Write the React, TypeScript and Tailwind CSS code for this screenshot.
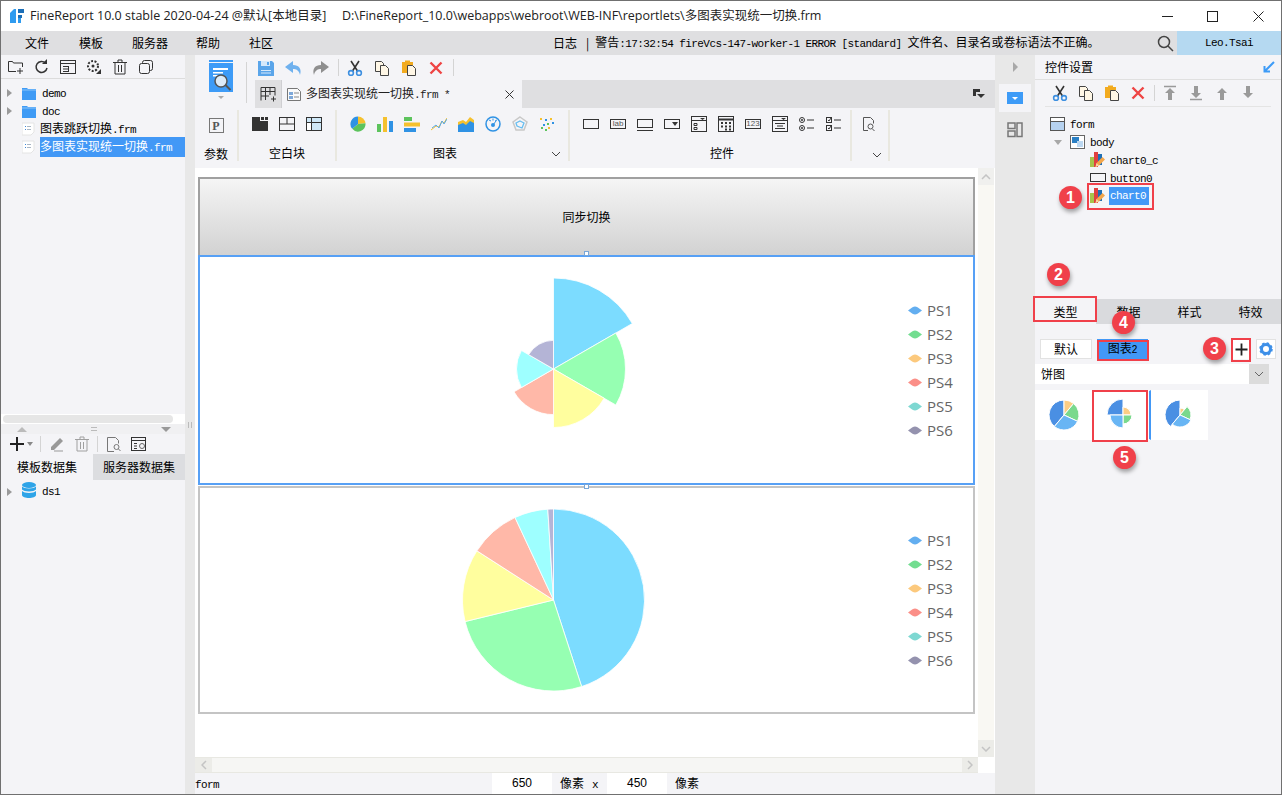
import type { ReactNode } from "react";

const polar = (cx: number, cy: number, r: number, deg: number) => {
  const a = ((deg - 90) * Math.PI) / 180;
  return `${(cx + r * Math.cos(a)).toFixed(2)} ${(cy + r * Math.sin(a)).toFixed(2)}`;
};

const sector = (cx: number, cy: number, r: number, a0: number, a1: number) =>
  `M${cx} ${cy}L${polar(cx, cy, r, a0)}A${r} ${r} 0 ${a1 - a0 > 180 ? 1 : 0} 1 ${polar(cx, cy, r, a1)}Z`;

const pieColors = ["#7cdcff", "#96ffb2", "#fffe9e", "#ffb8a8", "#9effff", "#b4b4d6"];
const legendColors = ["#63aef0", "#72dd90", "#fcc97d", "#fb8f88", "#7ed8d2", "#9492ae"];

const Ic = ({ children, w = 16, h = 16 }: { children: ReactNode; w?: number; h?: number }) => (
  <svg width={w} height={h} viewBox={`0 0 ${w} ${h}`} fill="none" className="shrink-0">
    {children}
  </svg>
);

// ascii part of the old bitmap font
const A = ({ children }: { children: ReactNode }) => (
  <span className="font-['Liberation_Mono',monospace] text-[11px] tracking-[-0.6px]">{children}</span>
);

const Logo = () => (
  <Ic>
    <path d="M1 5 5 1h2v14H1z" fill="#2f9bef" />
    <path d="M9 1h6v4H9zM9 7h4v3H9z" fill="#1c6fb8" />
    <path d="M9 10h3v5H9z" fill="#2f9bef" />
  </Ic>
);

const Cut = () => (
  <Ic>
    <path d="M4 1l6.5 10M12 1 5.5 11" stroke="#333" strokeWidth="1.6" />
    <circle cx="4" cy="13" r="2.4" stroke="#3d8fe0" strokeWidth="1.6" />
    <circle cx="12" cy="13" r="2.4" stroke="#3d8fe0" strokeWidth="1.6" />
  </Ic>
);

const CopyDoc = () => (
  <Ic>
    <path d="M1.5 1.5h6l2 2v8h-8z" fill="#fff7e6" stroke="#444" />
    <path d="M6.5 5.5h5l3 3v7h-8z" fill="#fff7e6" stroke="#444" />
  </Ic>
);

const Paste = () => (
  <Ic>
    <path d="M1 2h3V0.5h5V2h3v11H1z" fill="#f2ab1f" />
    <path d="M6.5 5.5h5l3 3v7h-8z" fill="#fff7e6" stroke="#444" />
  </Ic>
);

const RedX = () => (
  <Ic w={14} h={14}>
    <path d="M1.5 1.5l11 11M12.5 1.5l-11 11" stroke="#ee4444" strokeWidth="2.4" />
  </Ic>
);

const Save = () => (
  <Ic>
    <path d="M0 1h14l2 2v13H0z" fill="#5aa5ea" />
    <path d="M3 1h9v5H3z" fill="#d6e9fb" />
    <path d="M9 2h2v3H9z" fill="#5aa5ea" />
    <path d="M3 10h10v1H3zM3 12.500h10v1H3z" fill="#d6e9fb" />
  </Ic>
);

const Arrow = ({ color, flip }: { color: string; flip?: boolean }) => (
  <svg width="17" height="16" viewBox="0 0 17 16" className={flip ? "-scale-x-100 shrink-0" : "shrink-0"}>
    <path d="M8 1 0 7l8 6V9c3 0 6 1 7 6 2-6-1-10-7-10z" fill={color} />
  </svg>
);

const Sep = ({ h = 18, mx = 0 }: { h?: number; mx?: number }) => (
  <div className="w-px shrink-0 bg-[#d4d4d4]" style={{ height: h, marginLeft: mx, marginRight: mx }} />
);

const Tri = ({ down }: { down?: boolean }) =>
  down ? (
    <div className="h-0 w-0 shrink-0 border-x-[4px] border-t-[5px] border-x-transparent border-t-[#a8a8a8]" />
  ) : (
    <div className="h-0 w-0 shrink-0 border-y-[4px] border-l-[5px] border-y-transparent border-l-[#9a9a9a]" />
  );

const FolderIcon = () => (
  <Ic w={14} h={13}>
    <path d="M0 1h5l1 1h8v11H0z" fill="#3f9bf5" />
    <path d="M0 3h14" stroke="#8cc5fa" />
  </Ic>
);

const FrmIcon = () => (
  <Ic w={13} h={14}>
    <path d="M0 1h12v9l-3 3H0z" fill="#fff" stroke="#e4e4e4" />
    <path d="M3 4h1v1H3zM3 7h1v1H3z" fill="#3f87d8" />
    <path d="M5 4h4v1H5zM5 7h4v1H5z" fill="#a9b6c4" />
  </Ic>
);

const ChartNodeIcon = () => (
  <Ic>
    <path d="M0 5h5v10H0z" fill="#a7c44c" />
    <path d="M4 0h4v15H4z" fill="#e04040" />
    <path d="M8 2h4v11H8z" fill="#1f6fb5" />
    <path d="M5.500 15l1-4 6-6 2.500 2.500-6 6z" fill="#f4a64a" />
    <path d="M5.500 15l1-4 2.500 2.500z" fill="#f7d7a8" />
  </Ic>
);

const PieIcon = () => (
  <Ic>
    <path d={sector(8, 8, 7.500, 0, 85)} fill="#f5c12e" />
    <path d={sector(8, 8, 7.500, 85, 230)} fill="#5cc35c" />
    <path d={sector(8, 8, 7.500, 230, 360)} fill="#2f92e4" />
  </Ic>
);

const ChartIcons = () => (
  <>
    <PieIcon />
    <Ic>
      <path d="M0 8h4v8H0z" fill="#5cc35c" />
      <path d="M6 1h4v15H6z" fill="#f5c12e" />
      <path d="M12 5h4v11h-4z" fill="#2f92e4" />
    </Ic>
    <Ic>
      <path d="M0 1h8v4H0z" fill="#5cc35c" />
      <path d="M0 6.500h16v4H0z" fill="#f5c12e" />
      <path d="M0 12h12v4H0z" fill="#2f92e4" />
    </Ic>
    <Ic>
      <path d="M0 14l5-4 3 1 3-6 2 2 3-5" stroke="#f5c12e" />
      <path d="M1 12l4-3 3 3 3-7 2 3 3-5" stroke="#58a8e8" />
    </Ic>
    <Ic>
      <path d="M0 6l5-2 3 2 4-5 4 3v12H0z" fill="#f5c12e" />
      <path d="M0 9l5-2 3 2 4-4 4 2v9H0z" fill="#2f92e4" />
    </Ic>
    <Ic>
      <circle cx="8" cy="8" r="7" stroke="#2f92e4" strokeWidth="1.500" />
      <path d="M4 4l2 1M8 2.500v2M12 4l-2 1" stroke="#2f92e4" />
      <circle cx="8" cy="9" r="2" fill="#2f92e4" />
      <path d="M8 9l3-4" stroke="#2f92e4" />
    </Ic>
    <Ic>
      <path d="M8 1l7 5-3 8H4L1 6z" stroke="#c8c8c8" strokeWidth="1.500" />
      <path d="M8 5l4 2-2 5-5-2-1-3z" stroke="#67bdf0" strokeWidth="1.300" />
    </Ic>
    <Ic>
      <path d="M1 2h2v2H1zM11 2h2v2h-2zM9 11h2v2H9z" fill="#f5c12e" />
      <path d="M6 3h2v2H6zM4 8h2v2H4zM13 6h2v2h-2z" fill="#2f92e4" />
      <path d="M8 7h2v2H8zM2 11h2v2H2zM6 13h2v2H6z" fill="#5cc35c" />
    </Ic>
  </>
);

const Box = ({ children }: { children?: ReactNode }) => (
  <Ic>
    <rect x="0.500" y="3.500" width="15" height="9" stroke="#333" />
    {children}
  </Ic>
);

const WidgetIcons = () => (
  <>
    <Box />
    <div className="flex h-[10px] w-4 items-center justify-center border border-[#333] font-['Liberation_Sans',sans-serif] text-[8px] leading-none text-[#555]">
      lab
    </div>
    <Ic>
      <rect x="0.500" y="3.500" width="15" height="8" stroke="#333" />
      <path d="M0 14.500h16" stroke="#333" />
    </Ic>
    <Box>
      <path d="M8 6h6l-3 4z" fill="#333" />
    </Box>
    <Ic>
      <rect x="0.500" y="0.500" width="15" height="15" stroke="#333" />
      <path d="M0 4.500h16" stroke="#333" />
      <path d="M9 2h5l-2.500 2z" fill="#333" />
      <path d="M3 7.500h3v2H3zM3 11.500h3v2H3z" stroke="#333" />
    </Ic>
    <Ic>
      <rect x="0.500" y="0.500" width="15" height="15" stroke="#333" />
      <path d="M0 3.500h16" stroke="#333" strokeWidth="2" />
      <path d="M3 6h2v2H3zM7 6h2v2H7zM11 6h2v2h-2zM3 9.500h2v2H3zM7 9.500h2v2H7zM11 9.500h2v2h-2zM7 12.500h2v2H7zM11 12.500h2v2h-2z" fill="#333" />
    </Ic>
    <div className="flex h-[10px] w-4 items-center justify-center border border-[#333] font-['Liberation_Sans',sans-serif] text-[8px] leading-none text-[#555]">
      123
    </div>
    <Ic>
      <rect x="0.500" y="0.500" width="15" height="15" stroke="#333" />
      <path d="M0 4.500h16M3 7.500h10M5 10h6M3 12.500h10" stroke="#333" />
      <path d="M9 2h5l-2.500 2z" fill="#333" />
    </Ic>
    <Ic>
      <circle cx="3" cy="4" r="2.500" stroke="#333" />
      <circle cx="3" cy="4" r="1" fill="#333" />
      <circle cx="3" cy="12" r="2.500" stroke="#333" />
      <circle cx="3" cy="12" r="1" fill="#333" />
      <path d="M8 4h7M8 12h7" stroke="#333" />
    </Ic>
    <Ic>
      <rect x="0.500" y="1.500" width="5" height="5" stroke="#333" />
      <rect x="0.500" y="9.500" width="5" height="5" stroke="#333" />
      <path d="M2 4l1 1 2-3M2 12l1 1 2-3" stroke="#333" />
      <path d="M8 4h7M8 12h7" stroke="#333" />
    </Ic>
  </>
);

const LeftTree = () => (
  <div className="flex flex-1 flex-col pt-[5px] text-[12px] leading-[18px] text-black">
    {["demo", "doc"].map((n) => (
      <div key={n} className="flex h-[18px] items-center pl-[6px]">
        <Tri />
        <div className="ml-[10px]">
          <FolderIcon />
        </div>
        <span className="ml-[6px]">
          <A>{n}</A>
        </span>
      </div>
    ))}
    <div className="flex h-[18px] items-center pl-[21px]">
      <FrmIcon />
      <span className="ml-[5px]">
        图表跳跃切换<A>.frm</A>
      </span>
    </div>
    <div className="flex h-[18px] items-center pl-[21px]">
      <FrmIcon />
      <span className="ml-[5px] flex-1 bg-[#4298f6] text-white">
        多图表实现统一切换<A>.frm</A>
      </span>
    </div>
  </div>
);

const LeftPanel = () => (
  <div className="flex w-[184px] shrink-0 flex-col bg-[#f4f4f7]">
    <div className="flex h-[24px] shrink-0 items-center gap-[10px] border-b border-[#dcdcdc] pl-[7px] pt-px">
      <Ic>
        <path d="M8 12.500H0.500v-10h4l1 1.500h9v4" stroke="#333" />
        <path d="M9 12h6M12 9v6" stroke="#333" />
      </Ic>
      <Ic>
        <path d="M13 9a5.500 5.500 0 1 1-1.500-5" stroke="#333" strokeWidth="1.500" />
        <path d="M13 0v5H8z" fill="#333" />
      </Ic>
      <Ic>
        <rect x="0.500" y="1.500" width="15" height="13" stroke="#333" />
        <path d="M0 4.500h16M3 7.500h5M3 10h5M3 12.500h5M8.500 7v6" stroke="#333" />
      </Ic>
      <Ic>
        <circle cx="7" cy="7" r="5" stroke="#333" strokeWidth="2" strokeDasharray="2 1.500" />
        <circle cx="7" cy="7" r="1.500" fill="#333" />
        <path d="M10 15h5v-5z" fill="#333" />
      </Ic>
      <Ic>
        <path d="M1 3.500h14M6 3V1h4v2M3 4v11h10V4M6.500 6v7M9.500 6v7" stroke="#333" />
      </Ic>
      <Ic>
        <rect x="4.500" y="1.500" width="10" height="10" rx="2" stroke="#333" />
        <rect x="1.500" y="4.500" width="10" height="10" rx="2" fill="#f4f4f7" stroke="#333" />
      </Ic>
    </div>
    <LeftTree />
    <div className="flex h-[10px] shrink-0 items-center bg-white pl-[2px]">
      <div className="h-2 w-[170px] rounded-[4px] bg-[#e6e6e6]" />
    </div>
    <div className="flex h-[10px] shrink-0 items-center justify-between bg-[#f0f0f2] pl-[16px] pr-[14px]">
      <div className="h-0 w-0 border-x-[5px] border-b-[5px] border-x-transparent border-b-[#bbb]" />
      <div className="h-[4px] w-[6px] border-y border-[#bbb]" />
      <div className="h-0 w-0 border-x-[5px] border-t-[5px] border-x-transparent border-t-[#999]" />
    </div>
    <div className="flex h-[20px] shrink-0 items-center pl-[8px]">
      <Ic>
        <path d="M1 8h14M8 1v14" stroke="#222" strokeWidth="2" />
      </Ic>
      <div className="ml-[2px] h-0 w-0 border-x-[3px] border-t-[4px] border-x-transparent border-t-[#888]" />
      <div className="ml-[7px]">
        <Sep h={16} />
      </div>
      <div className="ml-[8px]">
        <Ic>
          <path d="M2 11 11 2l3 3-9 9H2z" fill="#999" />
          <path d="M5 15h9" stroke="#999" />
        </Ic>
      </div>
      <div className="ml-[9px]">
        <Ic>
          <path d="M1 3.500h14M6 3V1h4v2M3 4v11h10V4M6.500 6v7M9.500 6v7" stroke="#a0a0a0" />
        </Ic>
      </div>
      <div className="ml-[7px]">
        <Sep h={16} />
      </div>
      <div className="ml-[8px]">
        <Ic>
          <path d="M8 15.500H1.500v-14h8l3 3v3" stroke="#777" />
          <circle cx="10.500" cy="11" r="2.500" stroke="#777" />
          <path d="M12.500 13l2 2" stroke="#777" />
        </Ic>
      </div>
      <div className="ml-[9px]">
        <Ic>
          <rect x="0.500" y="1.500" width="14" height="13" stroke="#333" />
          <path d="M0 4.500h15M3 7.500h3M3 10h3M3 12.500h3" stroke="#333" />
          <circle cx="11" cy="10" r="2.500" stroke="#666" />
        </Ic>
      </div>
    </div>
    <div className="flex h-[26px] shrink-0 text-[12px] leading-[26px] text-black">
      <div className="w-[92px] text-center">模板数据集</div>
      <div className="flex-1 bg-[#dcdde0] text-center">服务器数据集</div>
    </div>
    <div className="flex h-[314px] shrink-0 items-start pl-[6px] pt-[2px] text-[12px]">
      <div className="mt-[6px]">
        <Tri />
      </div>
      <div className="ml-[10px]">
        <Ic w={14} h={16}>
          <ellipse cx="7" cy="3" rx="7" ry="3" fill="#2ea4e8" />
          <path d="M0 4.500c2 2.500 12 2.500 14 0v3c-2 2.500-12 2.500-14 0zM0 9c2 2.500 12 2.500 14 0v4c0 4-14 4-14 0z" fill="#2ea4e8" />
        </Ic>
      </div>
      <span className="ml-[6px] leading-[16px]">
        <A>ds1</A>
      </span>
    </div>
  </div>
);

const TopBar = () => (
  <div className="flex h-[53px] shrink-0 bg-[#f4f4f7]">
    <div className="flex w-[60px] shrink-0">
      <div className="ml-[14px] mt-[5px] flex w-6 flex-col items-center">
        <Ic w={24} h={32}>
          <path d="M0 0h24v2H0z" fill="#3d9bf7" />
          <path d="M0 3h24v29H0z" fill="#3d9bf7" />
          <path d="M4 8h15v2H4zM4 12h10v1.500H4zM4 15h6v1.500H4z" fill="#fff" />
          <circle cx="12" cy="21" r="6" fill="#dcebf9" stroke="#555" strokeWidth="1.500" />
          <path d="M16.500 25l5 5" stroke="#555" strokeWidth="2" />
        </Ic>
        <div className="mt-[4px] h-0 w-0 border-x-[3px] border-t-[3px] border-x-transparent border-t-[#aaa]" />
      </div>
      <div className="ml-[13px] mt-[7px]">
        <Sep h={41} />
      </div>
    </div>
    <div className="flex flex-1 flex-col">
      <div className="flex h-[25px] items-center pl-[3px]">
        <Save />
        <div className="ml-[11px]">
          <Arrow color="#6fb1ee" />
        </div>
        <div className="ml-[10px]">
          <Arrow color="#8f8f8f" flip />
        </div>
        <div className="ml-[9px]">
          <Sep h={17} />
        </div>
        <div className="ml-[8px]">
          <Cut />
        </div>
        <div className="ml-[11px]">
          <CopyDoc />
        </div>
        <div className="ml-[11px]">
          <Paste />
        </div>
        <div className="ml-[12px]">
          <RedX />
        </div>
        <div className="ml-[10px]">
          <Sep h={17} />
        </div>
      </div>
      <div className="flex h-[28px] bg-[#dfdfe1]">
        <div className="flex w-[27px] items-center justify-center border-r border-[#cfcfd2]">
          <Ic>
            <path d="M1 14.500v-13h14v8M1 5.500h14M1 10h8M5.500 2v12M10 2v7M11 13h5M13.500 10.500v5" stroke="#333" />
          </Ic>
        </div>
        <div className="flex w-[240px] items-center bg-[#f4f4f7] pl-[4px] text-[12px] text-[#222]">
          <Ic>
            <path d="M1.500 2.500h10l3 3v9h-13z" fill="#fafafa" stroke="#777" />
            <path d="M3 6h4v3H3zM3 10h4v3H3z" fill="#7ea8d8" />
            <path d="M8 7h5M8 11h5" stroke="#888" />
          </Ic>
          <span className="ml-[4px]">
            多图表实现统一切换<A>.frm *</A>
          </span>
          <div className="ml-auto mr-[8px]">
            <Ic w={9} h={9}>
              <path d="M0.500 0.500l8 8M8.500 0.500l-8 8" stroke="#333" />
            </Ic>
          </div>
        </div>
        <div className="ml-auto mr-[10px] flex items-center">
          <Ic w={12} h={10}>
            <path d="M0 0h7v3H3v4H0z" fill="#333" />
            <path d="M4 5h8l-4 4z" fill="#333" />
          </Ic>
        </div>
      </div>
    </div>
  </div>
);

const GroupSep = () => <div className="mt-[2px] h-[51px] w-[2px] shrink-0 bg-[#e9e8e0]" />;

const GroupRow = () => (
  <div className="flex h-[57px] shrink-0 bg-[#f4f4f7] text-[12px] text-black">
    <div className="flex w-[42px] shrink-0 flex-col items-center">
      <div className="mt-[10px] flex h-[15px] w-[15px] items-center justify-center border border-[#777] font-['Liberation_Serif',serif] text-[12px] font-bold leading-none text-[#555]">
        P
      </div>
      <div className="mt-[13px] leading-[16px]">参数</div>
    </div>
    <GroupSep />
    <div className="flex w-[96px] shrink-0 flex-col items-center">
      <div className="mt-[8px] flex gap-[11px]">
        <Ic>
          <path d="M0 1h8v4h8v10H0z" fill="#333" />
          <path d="M9 1h3v3H9zM13 1h3v3h-3z" fill="#333" />
        </Ic>
        <Ic>
          <rect x="0.500" y="1.500" width="15" height="13" stroke="#333" />
          <path d="M0 8h16M8 2v6" stroke="#333" />
        </Ic>
        <Ic>
          <rect x="0.500" y="1.500" width="15" height="13" fill="#cfe8f8" stroke="#333" />
          <path d="M0 6.500h16M5.500 2v13" stroke="#333" />
          <path d="M1 7h4v7H1z" fill="#fff" />
        </Ic>
      </div>
      <div className="mt-[13px] leading-[16px]">空白块</div>
    </div>
    <GroupSep />
    <div className="flex w-[231px] shrink-0 flex-col">
      <div className="mt-[8px] flex gap-[11px] pl-[13px]">
        <ChartIcons />
      </div>
      <div className="relative mt-[13px] pl-[96px] leading-[16px]">
        图表
        <svg width="10" height="6" viewBox="0 0 10 6" fill="none" className="absolute left-[214px] top-[6px]">
          <path d="M1 1l4 4 4-4" stroke="#444" />
        </svg>
      </div>
    </div>
    <GroupSep />
    <div className="flex w-[280px] shrink-0 flex-col">
      <div className="mt-[8px] flex h-4 items-center gap-[11px] pl-[13px]">
        <WidgetIcons />
      </div>
      <div className="mt-[13px] pl-[140px] leading-[16px]">控件</div>
    </div>
    <GroupSep />
    <div className="relative flex w-[36px] shrink-0 flex-col">
      <div className="ml-[10px] mt-[8px]">
        <Ic w={14} h={16}>
          <path d="M6 14.500H1.500v-13h7l3 3v3" stroke="#555" />
          <circle cx="8.500" cy="10.500" r="2.500" stroke="#555" />
          <path d="M10.500 13l2 2" stroke="#555" />
        </Ic>
      </div>
      <svg width="10" height="6" viewBox="0 0 10 6" fill="none" className="absolute left-[20px] top-[44px]">
        <path d="M1 1l4 4 4-4" stroke="#444" />
      </svg>
    </div>
    <GroupSep />
  </div>
);

const Legend = () => (
  <div className="ml-auto flex w-[65px] flex-col font-['Open_Sans',sans-serif] text-[15px] leading-[24px] text-[#666]">
    {legendColors.map((c, i) => (
      <div key={c} className="flex h-[24px] items-center">
        <svg width="14" height="9" viewBox="0 0 14 9" className="shrink-0">
          <path d="M0 4.500 4.500 1.200Q7 0 9.500 1.200L14 4.500 9.500 7.800Q7 9 4.500 7.800Z" fill={c} />
        </svg>
        <span className="ml-[5px]">PS{i + 1}</span>
      </div>
    ))}
  </div>
);

const polarRadii = [91, 72, 58.5, 45.6, 37, 28.7];
const pieStops = [0, 162, 256.3, 302.7, 335, 356.4, 360];

const ChartFrame = ({ selected, pie }: { selected?: boolean; pie: "rose" | "full" }) => (
  <div
    className={
      selected
        ? "flex h-[230px] shrink-0 items-center border-2 border-[#57a0f5] bg-white"
        : "mt-px flex h-[228px] shrink-0 items-center border-2 border-[#c4c4c4] bg-white"
    }
  >
    <svg width="190" height="190" viewBox="0 0 190 190" className="ml-[258px] shrink-0">
      {pieColors.map((c, i) => (
        <path
          key={c}
          d={
            pie === "rose"
              ? sector(95.5, 94, polarRadii[i], i * 60, (i + 1) * 60)
              : sector(95.5, 95, 91, pieStops[i], pieStops[i + 1])
          }
          fill={c}
          stroke="#fff"
          strokeWidth="0.8"
        />
      ))}
    </svg>
    <Legend />
  </div>
);

const Handle = ({ className }: { className: string }) => (
  <div className={`absolute h-[5px] w-[5px] border border-[#7aa7d8] bg-white ${className}`} />
);

const Canvas = () => (
  <div className="flex flex-1 flex-col">
    <div className="h-[3px] shrink-0 bg-[#f4f4f7]" />
    <div className="flex h-[589px] shrink-0">
      <div className="w-[783px] shrink-0 bg-white pl-[3px] pt-[9px]">
        <div className="relative w-[777px]">
          <div className="flex h-[78px] items-center justify-center border-2 border-b-0 border-[#a0a0a0] bg-gradient-to-b from-[#f5f5f5] to-[#d2d2d2] text-[12px] text-black">
            同步切换
          </div>
          <ChartFrame selected pie="rose" />
          <ChartFrame pie="full" />
          <Handle className="left-[386px] top-[74px]" />
          <Handle className="left-[386px] top-[307px]" />
        </div>
      </div>
      <div className="flex w-[16px] shrink-0 flex-col bg-[#f9f8f3]">
        <div className="flex h-[17px] items-center justify-center bg-[#f0f0ee]">
          <svg width="10" height="6" viewBox="0 0 10 6" fill="none">
            <path d="M1 5l4-4 4 4" stroke="#c4c4c4" strokeWidth="1.500" />
          </svg>
        </div>
        <div className="flex-1" />
        <div className="flex h-[17px] items-center justify-center bg-[#ecece8]">
          <svg width="10" height="6" viewBox="0 0 10 6" fill="none">
            <path d="M1 1l4 4 4-4" stroke="#c4c4c4" strokeWidth="1.500" />
          </svg>
        </div>
      </div>
      <div className="flex-1 bg-white" />
    </div>
    <div className="flex h-[16px] shrink-0 bg-white">
      <div className="flex w-[783px] shrink-0 items-center justify-between border-y border-[#e8e8e2] bg-[#f6f6f4]">
        <div className="flex h-full w-[17px] items-center justify-center bg-[#ecece8]">
          <svg width="6" height="10" viewBox="0 0 6 10" fill="none">
            <path d="M5 1 1 5l4 4" stroke="#c4c4c4" strokeWidth="1.500" />
          </svg>
        </div>
        <div className="flex h-full w-[16px] items-center justify-center bg-[#ecece8]">
          <svg width="6" height="10" viewBox="0 0 6 10" fill="none">
            <path d="M1 1l4 4-4 4" stroke="#c4c4c4" strokeWidth="1.500" />
          </svg>
        </div>
      </div>
    </div>
    <div className="flex h-[21px] shrink-0 items-stretch bg-[#f4f4f7] text-[12px] leading-[20px] text-black">
      <span className="w-[297px] shrink-0">
        <A>form</A>
      </span>
      <div className="w-[60px] bg-white text-center font-['Liberation_Sans',sans-serif]">650</div>
      <span className="ml-[8px]">像素</span>
      <span className="ml-[8px]">
        <A>x</A>
      </span>
      <div className="ml-[9px] w-[60px] bg-white text-center font-['Liberation_Sans',sans-serif]">450</div>
      <span className="ml-[8px]">像素</span>
    </div>
  </div>
);

const Strip = () => (
  <div className="flex w-[40px] shrink-0 flex-col items-center bg-[#e8e8e8]">
    <div className="mt-[7px] h-0 w-0 border-y-[5px] border-l-[5px] border-y-transparent border-l-[#a8a8a8]" />
    <div className="mt-[12px] flex h-[28px] w-[32px] items-center justify-center bg-[#f4f4f7]">
      <div className="flex h-[12px] w-4 items-center justify-center bg-[#3d9bf7]">
        <div className="h-0 w-0 border-x-[3px] border-t-[3px] border-x-transparent border-t-white" />
      </div>
    </div>
    <div className="mt-[10px]">
      <Ic>
        <rect x="1" y="1" width="7" height="5.500" stroke="#777" strokeWidth="1.500" />
        <rect x="1" y="9" width="7" height="5.500" stroke="#777" strokeWidth="1.500" />
        <rect x="10" y="1" width="5" height="13.500" stroke="#777" strokeWidth="1.500" />
      </Ic>
    </div>
  </div>
);

const UpDown = ({ d, line }: { d: "up" | "down"; line?: "top" | "bottom" }) => (
  <Ic w={12} h={16}>
    {line === "top" && <path d="M0 1.500h12" stroke="#9a9a9a" strokeWidth="1.500" />}
    {line === "bottom" && <path d="M0 14.500h12" stroke="#9a9a9a" strokeWidth="1.500" />}
    {d === "up" ? (
      <path d="M6 3 1 8h3v7h4V8h3z" fill="#9a9a9a" />
    ) : (
      <path d="M6 13 1 8h3V1h4v7h3z" fill="#9a9a9a" />
    )}
  </Ic>
);

const treeRow = "flex h-[18px] items-center";

const RightPanel = () => (
  <div className="flex flex-1 flex-col bg-[#f4f4f7] text-[12px] text-black">
    <div className="flex h-[25px] shrink-0 items-center justify-between border-b border-[#e0e0e0] pl-[10px] pr-[6px]">
      <span>控件设置</span>
      <svg width="12" height="12" viewBox="0 0 12 12" fill="none">
        <path d="M11 1 2 10M1.500 5v5.500H7" stroke="#3d9bf7" strokeWidth="2" />
      </svg>
    </div>
    <div className="mx-[10px] flex h-[27px] shrink-0 items-center border-b border-[#e4e4e4] pl-[7px]">
      <Cut />
      <div className="ml-[10px]">
        <CopyDoc />
      </div>
      <div className="ml-[10px]">
        <Paste />
      </div>
      <div className="ml-[11px]">
        <RedX />
      </div>
      <div className="ml-[9px]">
        <Sep h={16} />
      </div>
      <div className="ml-[9px] flex gap-[14px]">
        <UpDown d="up" line="top" />
        <UpDown d="down" line="bottom" />
        <UpDown d="up" />
        <UpDown d="down" />
      </div>
    </div>
    <div className="h-[192px] shrink-0 pt-[8px]">
      <div className={`${treeRow} pl-[15px]`}>
        <Ic w={15} h={14}>
          <rect x="0.500" y="0.500" width="14" height="13" fill="#b6d2f0" stroke="#555" />
          <path d="M1 1h13v3H1z" fill="#fff" />
          <path d="M0 4.500h15" stroke="#555" />
        </Ic>
        <span className="ml-[5px]">
          <A>form</A>
        </span>
      </div>
      <div className={`${treeRow} pl-[19px]`}>
        <Tri down />
        <div className="ml-[8px]">
          <Ic w={15} h={14}>
            <rect x="0.500" y="0.500" width="14" height="13" fill="#fff" stroke="#666" />
            <path d="M2 2h7v6H2z" fill="#2a7fc4" />
            <path d="M7 6h6v6H7z" fill="#bcd8f2" />
          </Ic>
        </div>
        <span className="ml-[5px]">
          <A>body</A>
        </span>
      </div>
      <div className={`${treeRow} pl-[55px]`}>
        <ChartNodeIcon />
        <span className="ml-[4px]">
          <A>chart0_c</A>
        </span>
      </div>
      <div className={`${treeRow} pl-[55px]`}>
        <Ic>
          <rect x="0.500" y="3.500" width="15" height="8" stroke="#333" />
          <path d="M0 14.500h16" stroke="#333" />
        </Ic>
        <span className="ml-[4px]">
          <A>button0</A>
        </span>
      </div>
      <div className={`${treeRow} pl-[55px]`}>
        <ChartNodeIcon />
        <span className="relative ml-[3px] flex h-[18px] w-[40px] items-center bg-[#4298f6] pl-px text-white">
          <A>chart0</A>
        </span>
      </div>
    </div>
    <div className="flex h-[25px] shrink-0 items-center text-center leading-[25px]">
      <div className="w-[61px]">类型</div>
      <div className="flex h-full flex-1 bg-[#d9dadd]">
        <div className="flex-1 pl-[2px]">数据</div>
        <div className="flex-1">样式</div>
        <div className="flex-1">特效</div>
      </div>
    </div>
    <div className="flex h-[20px] shrink-0 items-stretch pl-[5px] mt-[15px] leading-[18px]">
      <div className="w-[52px] border border-[#e2e2e2] bg-white text-center">默认</div>
      <div className="ml-[5px] w-[51px] bg-[#4298f6] text-center">
        图表<span className="font-['Liberation_Sans',sans-serif] text-[10px]">2</span>
      </div>
      <div className="ml-[84px] flex w-[19px] items-center justify-center bg-white">
        <Ic w={13} h={13}>
          <path d="M0.500 6.500h12M6.500 0.500v12" stroke="#222" strokeWidth="1.800" />
        </Ic>
      </div>
      <div className="ml-[5px] flex w-[20px] items-center justify-center border border-[#e2e2e2] bg-white">
        <Ic w={14} h={14}>
          <circle cx="7" cy="7" r="4.500" stroke="#3d8fe8" strokeWidth="3" />
          <circle cx="7" cy="7" r="6" stroke="#3d8fe8" strokeWidth="1.500" strokeDasharray="2.500 2.200" />
        </Ic>
      </div>
    </div>
    <div className="mt-[5px] flex h-[20px] w-[234px] shrink-0 items-center bg-white pl-[6px] leading-[20px]">
      饼图
      <div className="ml-auto flex h-full w-[20px] items-center justify-center bg-[#dcdcdc]">
        <svg width="10" height="6" viewBox="0 0 10 6" fill="none">
          <path d="M1 1l4 4 4-4" stroke="#666" />
        </svg>
      </div>
    </div>
    <div className="mt-[6px] flex h-[50px] w-[173px] shrink-0 items-center bg-white">
      <div className="flex w-[58px] items-center justify-center">
        <svg width="32" height="32" viewBox="0 0 32 32">
          <path d={sector(16, 16, 15, 220, 360)} fill="#4a8fe3" stroke="#fff" />
          <path d={sector(16, 16, 15, 0, 40)} fill="#fbcd85" stroke="#fff" />
          <path d={sector(16, 16, 15, 40, 115)} fill="#7ad98d" stroke="#fff" />
          <path d={sector(16, 16, 15, 115, 220)} fill="#68b5f4" stroke="#fff" />
        </svg>
      </div>
      <div className="flex h-full w-[58px] items-center justify-center border-y border-r-2 border-[#4298f6] border-y-white pl-[3px]">
        <svg width="34" height="34" viewBox="0 0 34 34">
          <path d={sector(17, 17, 16, 270, 360)} fill="#4a8fe3" stroke="#fff" />
          <path d={sector(17, 17, 8, 0, 90)} fill="#fbcd85" stroke="#fff" />
          <path d={sector(17, 17, 9, 90, 180)} fill="#7ad98d" stroke="#fff" />
          <path d={sector(17, 17, 13, 180, 270)} fill="#68b5f4" stroke="#fff" />
        </svg>
      </div>
      <div className="flex flex-1 items-center justify-center">
        <svg width="32" height="32" viewBox="0 0 32 32">
          <path d={sector(16, 16, 15, 220, 360)} fill="#4a8fe3" stroke="#fff" />
          <path d={sector(16, 16, 7, 0, 40)} fill="#fbcd85" stroke="#fff" />
          <path d={sector(16, 16, 11, 40, 115)} fill="#7ad98d" stroke="#fff" />
          <path d={sector(16, 16, 12, 115, 220)} fill="#68b5f4" stroke="#fff" />
        </svg>
      </div>
    </div>
  </div>
);

const Badge = ({ n, className }: { n: number; className: string }) => (
  <div
    className={`absolute flex h-[23px] w-[23px] items-center justify-center rounded-full bg-[#f0404a] font-['Liberation_Sans',sans-serif] text-[16px] font-bold text-white shadow-[1px_3px_4px_rgba(0,0,0,0.35)] ${className}`}
  >
    {n}
  </div>
);

const Mark = ({ className }: { className: string }) => (
  <div className={`absolute border-2 border-[#f0404a] ${className}`} />
);

export default function App() {
  return (
    <div className="relative flex h-[795px] w-[1282px] flex-col overflow-hidden border border-[#707070] bg-white font-['Noto_Sans_CJK_SC',sans-serif]">
      <div className="flex h-[30px] shrink-0 items-center bg-white font-['Open_Sans','Noto_Sans_CJK_SC',sans-serif] text-[12.500px] text-[#222]">
        <div className="ml-[8px]">
          <Logo />
        </div>
        <span className="ml-[5px] w-[312px] whitespace-nowrap">FineReport 10.0 stable 2020-04-24 @默认[本地目录]</span>
        <span className="whitespace-nowrap">D:\FineReport_10.0\webapps\webroot\WEB-INF\reportlets\多图表实现统一切换.frm</span>
        <div className="ml-auto flex items-center">
          <Ic w={12} h={12}>
            <path d="M0 6.500h11" stroke="#222" />
          </Ic>
          <div className="ml-[33px]">
            <Ic w={11} h={11}>
              <rect x="0.500" y="0.500" width="10" height="10" stroke="#222" />
            </Ic>
          </div>
          <div className="ml-[35px] mr-[17px]">
            <Ic w={11} h={11}>
              <path d="M0.500 0.500l10 10M10.500 0.500l-10 10" stroke="#222" />
            </Ic>
          </div>
        </div>
      </div>

      <div className="flex h-[24px] shrink-0 items-center bg-[#dfdfe1] text-[12px] text-black">
        <span className="ml-[24px]">文件</span>
        <span className="ml-[30px]">模板</span>
        <span className="ml-[29px]">服务器</span>
        <span className="ml-[28px]">帮助</span>
        <span className="ml-[29px]">社区</span>
        <span className="ml-[280px] whitespace-nowrap">日志</span>
        <span className="ml-[9px]">|</span>
        <span className="ml-[6px] whitespace-nowrap">
          警告<A>:17:32:54 fireVcs-147-worker-1 ERROR [standard] </A>文件名、目录名或卷标语法不正确。
        </span>
        <div className="ml-auto flex h-full items-center">
          <svg width="17" height="17" viewBox="0 0 17 17" fill="none">
            <circle cx="7" cy="7" r="5.500" stroke="#444" strokeWidth="1.500" />
            <path d="M11 11l5 5" stroke="#444" strokeWidth="1.500" />
          </svg>
          <div className="ml-[3px] flex h-full w-[104px] items-center justify-center bg-[#b5d9f1]">
            <A>Leo.Tsai</A>
          </div>
        </div>
      </div>

      <div className="flex flex-1">
        <LeftPanel />
        <div className="flex w-[10px] shrink-0 items-center justify-center bg-[#e8e8e8]">
          <div className="h-[6px] w-[4px] border-x border-[#bbb]" />
        </div>
        <div className="flex w-[800px] shrink-0 flex-col">
          <TopBar />
          <GroupRow />
          <Canvas />
        </div>
        <Strip />
        <RightPanel />
      </div>

      <Mark className="left-[1086px] top-[182px] h-[27px] w-[67px]" />
      <Mark className="left-[1032px] top-[295px] h-[26px] w-[64px]" />
      <Mark className="left-[1096px] top-[339px] h-[21px] w-[52px]" />
      <Mark className="left-[1230px] top-[337px] h-[24px] w-[20px]" />
      <Mark className="left-[1091px] top-[389px] h-[52px] w-[56px]" />
      <Badge n={1} className="left-[1058px] top-[185px]" />
      <Badge n={2} className="left-[1046px] top-[262px]" />
      <Badge n={3} className="left-[1202px] top-[336px]" />
      <Badge n={4} className="left-[1111px] top-[310px]" />
      <Badge n={5} className="left-[1112px] top-[445px]" />
    </div>
  );
}
